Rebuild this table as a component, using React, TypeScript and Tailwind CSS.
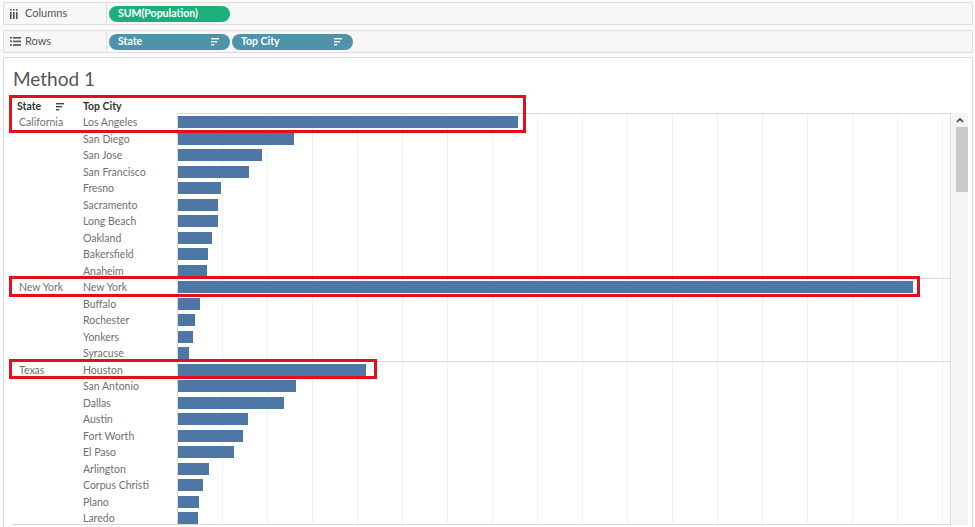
import React from 'react';

type Group = { state: string; rows: [string, number][] };

// bar end x positions measured from the view, axis starts at 177
const groups: Group[] = [
  {
    state: 'California',
    rows: [
      ['Los Angeles', 518], ['San Diego', 294], ['San Jose', 262], ['San Francisco', 249], ['Fresno', 221],
      ['Sacramento', 218], ['Long Beach', 218], ['Oakland', 212], ['Bakersfield', 208], ['Anaheim', 207],
    ],
  },
  {
    state: 'New York',
    rows: [['New York', 913], ['Buffalo', 200], ['Rochester', 195], ['Yonkers', 193], ['Syracuse', 189]],
  },
  {
    state: 'Texas',
    rows: [
      ['Houston', 366], ['San Antonio', 296], ['Dallas', 284], ['Austin', 248], ['Fort Worth', 243],
      ['El Paso', 234], ['Arlington', 209], ['Corpus Christi', 203], ['Plano', 199], ['Laredo', 198],
    ],
  },
];

const font = { fontFamily: 'Lato, "Noto Sans", sans-serif' };

const SortIcon = ({ color = '#555' }: { color?: string }) => (
  <svg width="9" height="8" viewBox="0 0 9 8">
    <rect x="0" y="0" width="8" height="1.4" fill={color} />
    <rect x="0" y="3" width="6" height="1.4" fill={color} />
    <rect x="0" y="6" width="3.3" height="1.4" fill={color} />
  </svg>
);

const ColumnsIcon = () => (
  <svg width="8" height="10" viewBox="0 0 8 10" fill="#555">
    <rect x="0" y="0" width="1.6" height="1.6" />
    <rect x="3" y="0" width="1.6" height="1.6" />
    <rect x="6" y="0" width="1.6" height="1.6" />
    <rect x="0" y="3" width="1.6" height="7" />
    <rect x="3" y="3" width="1.6" height="7" />
    <rect x="6" y="3" width="1.6" height="7" />
  </svg>
);

const RowsIcon = () => (
  <svg width="11" height="9" viewBox="0 0 11 9" fill="#555">
    <rect x="0" y="0" width="2" height="1.6" />
    <rect x="3" y="0" width="8" height="1.6" />
    <rect x="0" y="3.6" width="2" height="1.6" />
    <rect x="3" y="3.6" width="8" height="1.6" />
    <rect x="0" y="7.2" width="2" height="1.6" />
    <rect x="3" y="7.2" width="8" height="1.6" />
  </svg>
);

const Pill = ({ label, green, sort }: { label: string; green?: boolean; sort?: boolean }) => (
  <div
    className={`flex h-[16px] w-[121px] items-center justify-between rounded-full pl-[9px] pr-[10px] text-[10.5px] font-bold text-white ${green ? 'bg-[#1bb07a]' : 'bg-[#4f93ab]'}`}
  >
    <span>{label}</span>
    {sort && <SortIcon color="#fff" />}
  </div>
);

const Shelf = ({ icon, label, children }: { icon: React.ReactNode; label: string; children: React.ReactNode }) => (
  <div className="ml-[3px] flex h-[23px] w-[970px] border border-[#dedede] bg-[#f7f7f7]">
    <div className="flex w-[103px] items-center gap-[4px] border-r border-[#dedede] pl-[6px] text-[11px] text-[#555]">
      <span className="flex w-[11px] justify-start">{icon}</span>
      {label}
    </div>
    <div className="flex items-center gap-[2px] pl-[2px]">{children}</div>
  </div>
);

export default function App() {
  return (
    <div className="h-[527px] w-[975px] overflow-hidden bg-[#fbfbfb] pt-[2px]" style={font}>
      <Shelf icon={<ColumnsIcon />} label="Columns">
        <Pill label="SUM(Population)" green />
      </Shelf>
      <div className="h-[5px]" />
      <Shelf icon={<RowsIcon />} label="Rows">
        <Pill label="State" sort />
        <Pill label="Top City" sort />
      </Shelf>

      <div className="relative ml-[3px] mt-[4px] h-[480px] w-[970px] border border-[#dcdcdc] bg-white">
        <div className="h-[38px] pl-[9px] pt-[9px] text-[19px] leading-[24px] text-[#555]">Method 1</div>

        <div className="flex h-[17px] items-center pl-[13px] pt-[4px] text-[10.5px] font-bold text-[#333]">
          <span className="w-[39px]">State</span>
          <span className="w-[27px]">
            <SortIcon color="#444" />
          </span>
          <span>Top City</span>
        </div>

        <div className="flex">
          <div className="ml-[8px] flex h-[412px] overflow-hidden border-b border-[#d9d9d9]">
            <div className="w-[165px] border-t border-transparent text-[10.5px] text-[#707070]">
              {groups.map((g, gi) => (
                <div key={g.state} className={gi > 0 ? '-mt-px border-t border-[#d9d9d9]' : ''}>
                  {g.rows.map(([city], i) => (
                    <div key={city} className="flex h-[16.5px] items-center pt-[2px]">
                      <span className="w-[65px] pl-[7px]">{i === 0 ? g.state : ''}</span>
                      <span className="pl-[6px]">{city}</span>
                    </div>
                  ))}
                </div>
              ))}
            </div>
            <div className="w-[774px] border-x border-t border-[#d9d9d9] bg-[repeating-linear-gradient(90deg,transparent_0px,transparent_44px,#f0f0f0_44px,#f0f0f0_45px)]">
              {groups.map((g, gi) => (
                <div key={g.state} className={gi > 0 ? '-mt-px border-t border-[#d9d9d9]' : ''}>
                  {g.rows.map(([city, end]) => (
                    <div key={city} className="flex h-[16.5px] items-center">
                      <div className="h-[12px] bg-[#4e77a5]" style={{ width: end - 178 }} />
                    </div>
                  ))}
                </div>
              ))}
            </div>
          </div>

          <div className="ml-[1px] flex h-[412px] w-[16px] flex-col items-center bg-[#f4f4f4]">
            <svg width="8" height="6" viewBox="0 0 8 6" className="mt-[4px]">
              <path d="M1 5 L4 2 L7 5" stroke="#444" strokeWidth="1.6" fill="none" />
            </svg>
            <div className="ml-[3px] mt-[4px] h-[65px] w-[12px] bg-[#c9c9c9]" />
          </div>
        </div>

        {/* red annotation boxes */}
        <div className="absolute left-[5px] top-[37px] h-[38px] w-[517px] border-[3px] border-[#e3101c]" />
        <div className="absolute left-[5px] top-[218px] h-[21px] w-[911px] border-[3px] border-[#e3101c]" />
        <div className="absolute left-[5px] top-[301px] h-[20px] w-[368px] border-[3px] border-[#e3101c]" />
      </div>
    </div>
  );
}
